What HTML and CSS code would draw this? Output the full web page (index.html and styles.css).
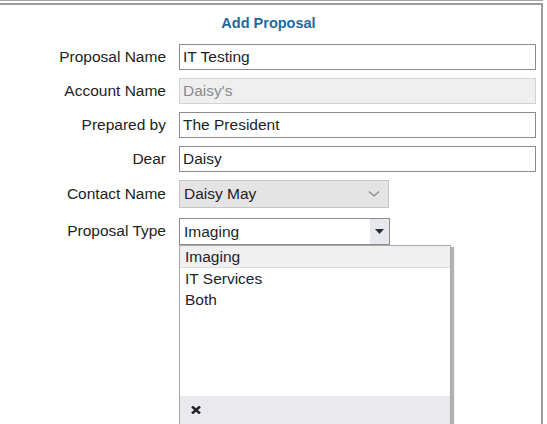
FILE: index.html
```html
<!DOCTYPE html>
<html lang="en">
<head>
  <meta charset="UTF-8">
  <meta name="viewport" content="width=device-width, initial-scale=1.0">
  <title>Add Proposal</title>
  <link rel="stylesheet" href="styles.css">
</head>
<body>
  <div class="frame">
    <div class="panel">
      <h2 class="title">Add Proposal</h2>
      <div class="form">
        <label class="label">Proposal Name</label>
        <div class="field"><div class="input">IT Testing</div></div>

        <label class="label">Account Name</label>
        <div class="field"><div class="input disabled">Daisy's</div></div>

        <label class="label">Prepared by</label>
        <div class="field"><div class="input">The President</div></div>

        <label class="label">Dear</label>
        <div class="field"><div class="input">Daisy</div></div>

        <label class="label">Contact Name</label>
        <div class="field">
          <div class="select native">
            <span>Daisy May</span>
            <svg class="chevron" width="12" height="8" viewBox="0 0 12 8"><path d="M1 1.5 L6 6 L11 1.5" fill="none" stroke="#8a8a8a" stroke-width="1.3"/></svg>
          </div>
        </div>

        <label class="label">Proposal Type</label>
        <div class="field">
          <div class="select combo">
            <span class="combo-text">Imaging</span>
            <span class="combo-btn">
              <svg width="9" height="5" viewBox="0 0 9 5"><path d="M0 0 H9 L4.5 5 Z" fill="#2b2b35"/></svg>
            </span>
          </div>
          <!-- open dropdown list -->
          <div class="dropdown">
            <ul class="options">
              <li class="option selected">Imaging</li>
              <li class="option">IT Services</li>
              <li class="option">Both</li>
            </ul>
            <div class="dropdown-footer">
              <svg width="10" height="8" viewBox="0 0 10 8"><path d="M1 0.5 L9 7.5 M9 0.5 L1 7.5" stroke="#23232b" stroke-width="2.5"/></svg>
            </div>
          </div>
        </div>
      </div>
    </div>
  </div>
</body>
</html>
```

FILE: styles.css
```css
    /* Page basics */
    body {
      margin: 0;
      font-family: "Liberation Sans", Arial, sans-serif;
      color: #222;
      background: #fff;
      overflow: hidden;
    }
    /* Window frame lines at the top */
    .frame {
      width: 543px;
      border-top: 1px solid #a3a3a3;
      padding-top: 2px;
    }
    .panel {
      width: 541px;
      height: 430px;
      border-top: 2px solid #9c9c9c;
      border-right: 2px solid #9c9c9c;
    }
    .title {
      margin: 0;
      padding: 10px 4px 0 0;
      font-size: 14.5px;
      font-weight: bold;
      color: #1d6a9c;
      text-align: center;
    }
    /* Label / field grid */
    .form {
      display: grid;
      grid-template-columns: 166px auto;
      column-gap: 13px;
      row-gap: 8px;
      margin-top: 13px;
      align-items: center;
    }
    .label {
      text-align: right;
      font-size: 15.5px;
      color: #222;
    }
    .field {
      position: relative;
    }
    .input {
      box-sizing: border-box;
      width: 357px;
      height: 26px;
      border: 1px solid #8c8c8c;
      padding: 0 3px;
      font-size: 15.5px;
      line-height: 24px;
      color: #1e1e2a;
      background: #fff;
    }
    .input.disabled {
      background: #efefef;
      border-color: #d2d2d2;
      color: #8a8a8a;
    }
    /* Selects */
    .select {
      box-sizing: border-box;
      display: flex;
      align-items: center;
      height: 28px;
      font-size: 15.5px;
      color: #1e1e2a;
    }
    .native {
      width: 210px;
      padding: 0 6px 0 4px;
      justify-content: space-between;
      background: #e4e4e4;
      border: 1px solid #c6c6c6;
    }
    .chevron {
      margin-right: 2px;
    }
    .combo {
      width: 211px;
      margin-top: 2px;
      height: 27px;
      border: 1px solid #8c8c8c;
      background: #fff;
    }
    .combo-text {
      flex: 1;
      padding-left: 4px;
    }
    .combo-btn {
      width: 19px;
      height: 100%;
      display: flex;
      align-items: center;
      justify-content: center;
      background: #e7e7ee;
    }
    /* Open list below the combo */
    .dropdown {
      position: absolute;
      top: 100%;
      left: 0;
      box-sizing: border-box;
      width: 272px;
      height: 180px;
      border: 1px solid #a8a8a8;
      background: #fff;
      box-shadow: 3px 2px 1px rgba(0, 0, 0, 0.3);
      display: flex;
      flex-direction: column;
    }
    .options {
      list-style: none;
      margin: 0;
      padding: 0;
      flex: 1;
    }
    .option {
      padding-left: 5px;
      height: 21px;
      line-height: 21px;
      font-size: 15.5px;
      color: #23232e;
    }
    .option.selected {
      background: #f0f0f0;
      border-bottom: 1px solid #dedede;
    }
    .dropdown-footer {
      height: 28px;
      background: #e9e9ee;
      display: flex;
      align-items: center;
      padding-left: 11px;
    }
```
